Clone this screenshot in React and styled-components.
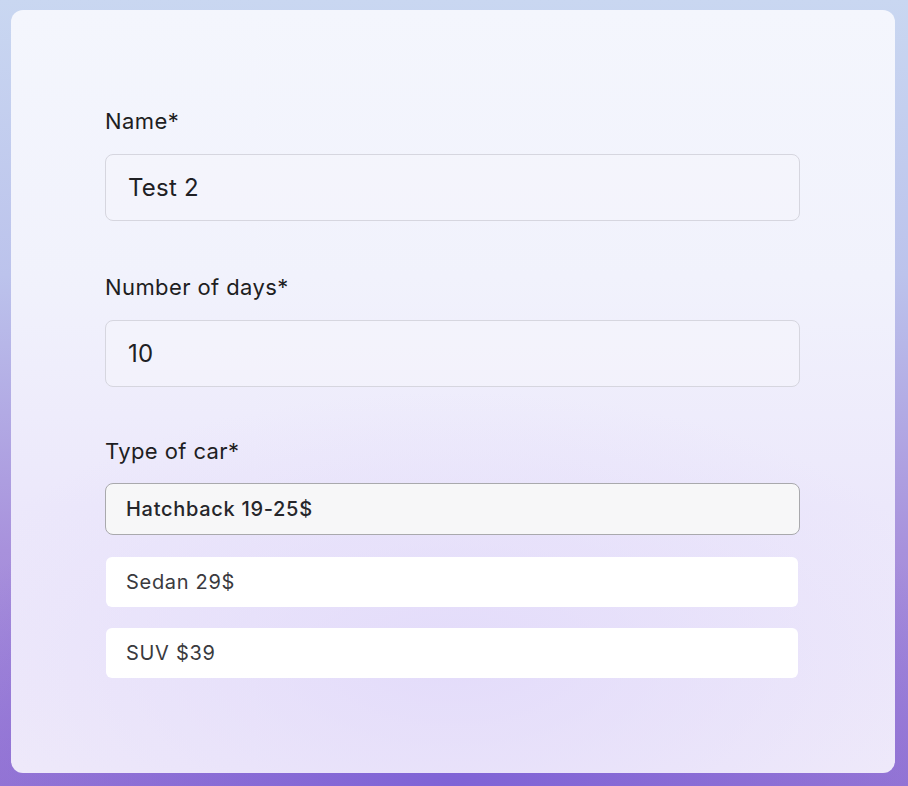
import React from "react";
import styled, { createGlobalStyle } from "styled-components";

const Global = createGlobalStyle`
  html, body { margin: 0; padding: 0; }
  body {
    width: 908px;
    height: 786px;
    overflow: hidden;
    font-family: Inter, "Noto Sans", sans-serif;
    background:
      radial-gradient(ellipse 70% 40% at 50% 100%, #7f63d6 0%, rgba(127,99,214,0) 100%),
      linear-gradient(180deg, #c9d7f1 0%, #bcc3ec 35%, #a891dc 70%, #9a7ad4 100%);
  }
  #root { height: 100%; }
`;

const Page = styled.div`
  box-sizing: border-box;
  height: 786px;
  padding: 10px 13px 13px 11px;
  display: flex;
`;

const Card = styled.div`
  flex: 1;
  border-radius: 12px;
  box-sizing: border-box;
  padding: 99px 95px 0 94px;
  background:
    radial-gradient(ellipse 60% 35% at 50% 85%, rgba(226,218,250,0.9) 0%, rgba(226,218,250,0) 100%),
    linear-gradient(180deg, #f4f6fd 0%, #f1f2fc 35%, #ece8fb 65%, #efeafa 100%);
  display: flex;
  flex-direction: column;
`;

const Field = styled.div`
  display: flex;
  flex-direction: column;
  margin-bottom: ${(p) => p.$gap || 0}px;
`;

const Label = styled.label`
  font-size: 22px;
  line-height: 24px;
  color: #1e1e22;
  font-weight: 400;
  letter-spacing: 0.4px;
  margin-bottom: ${(p) => p.$gap ?? 21}px;
`;

const Input = styled.div`
  box-sizing: border-box;
  height: 67px;
  border: 1px solid #d6d6df;
  border-radius: 8px;
  background: rgba(245, 245, 252, 0.6);
  display: flex;
  align-items: center;
  padding: 0 22px;
  font-size: 24px;
  color: #202024;
  letter-spacing: 0.2px;
`;

const Options = styled.div`
  display: flex;
  flex-direction: column;
  gap: 21px;
`;

const Option = styled.div`
  box-sizing: border-box;
  height: ${(p) => (p.$selected ? 52 : 50)}px;
  margin: ${(p) => (p.$selected ? "0 0 1px 0" : "0 2px 0 1px")};
  border-radius: ${(p) => (p.$selected ? 8 : 6)}px;
  border: ${(p) => (p.$selected ? "1px solid #a9a9ad" : "none")};
  background: ${(p) => (p.$selected ? "#f7f7f8" : "#ffffff")};
  display: flex;
  align-items: center;
  padding: 0 20px;
  font-size: 20px;
  font-weight: ${(p) => (p.$selected ? 500 : 400)};
  color: ${(p) => (p.$selected ? "#26262a" : "#3a3a3e")};
  letter-spacing: ${(p) => (p.$selected ? 0.7 : 0.7)}px;
`;

export default function App() {
  return (
    <>
      <Global />
      <Page>
        <Card>
          <Field $gap={54}>
            <Label>Name*</Label>
            <Input>Test 2</Input>
          </Field>
          <Field $gap={52}>
            <Label>Number of days*</Label>
            <Input>10</Input>
          </Field>
          <Field>
            <Label $gap={20}>Type of car*</Label>
            <Options>
              <Option $selected>Hatchback 19-25$</Option>
              <Option>Sedan 29$</Option>
              <Option>SUV $39</Option>
            </Options>
          </Field>
        </Card>
      </Page>
    </>
  );
}
